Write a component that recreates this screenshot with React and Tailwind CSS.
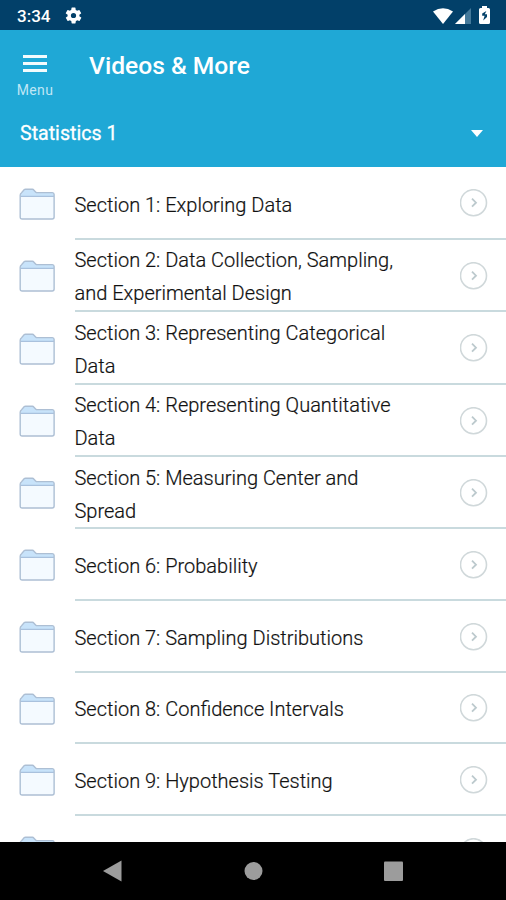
import React from "react";

const sections = [
  { title: "Section 1: Exploring Data", h: "h-[73px]", pad: "pt-[5px]" },
  { title: "Section 2: Data Collection, Sampling, and Experimental Design", h: "h-[72px]", pad: "pt-1" },
  { title: "Section 3: Representing Categorical Data", h: "h-[73px]", pad: "pt-1" },
  { title: "Section 4: Representing Quantitative Data", h: "h-[72px]", pad: "pt-1" },
  { title: "Section 5: Measuring Center and Spread", h: "h-[72px]", pad: "pt-[5px]" },
  { title: "Section 6: Probability", h: "h-[72px]", pad: "pt-1" },
  { title: "Section 7: Sampling Distributions", h: "h-[72px]", pad: "pt-1" },
  { title: "Section 8: Confidence Intervals", h: "h-[71px]", pad: "pt-1" },
  { title: "Section 9: Hypothesis Testing", h: "h-[72px]", pad: "pt-[5px]" },
  { title: "", h: "h-[72px]", pad: "pt-1" },
];

function Folder() {
  return (
    <svg className="ml-[19px] h-8 w-[36.5px] shrink-0" viewBox="0 0 37 32" preserveAspectRatio="none" fill="none">
      <path d="M1.2 29V8.2L2.6 5L5.8 1.2H14.2L17.8 4.6H34.2Q35.6 4.6 35.6 6.2V29Q35.6 31 33.6 31H3.2Q1.2 31 1.2 29Z" fill="#c8e3fa" />
      <path d="M1.4 8.8H35.4V29Q35.4 31 33.6 31H3.2Q1.4 31 1.4 29Z" fill="#f4faff" />
      <path d="M1.4 8.4H35.4" stroke="#a9c1dd" strokeWidth="1.3" />
      <path d="M1.2 29V7.2Q1.2 5.6 2.6 4.8L5.4 1.6Q5.8 1.2 6.6 1.2H13.6Q14.4 1.2 15 2L16.8 3.9Q17.5 4.6 18.3 4.6H33.8Q35.6 4.6 35.6 6.4V29Q35.6 31 33.6 31H3.2Q1.2 31 1.2 29Z" stroke="#adbfd4" strokeWidth="1.4" />
    </svg>
  );
}

function Chevron() {
  return (
    <svg className="mt-px mr-[18px] h-7 w-7 shrink-0" viewBox="0 0 28 28" fill="none">
      <circle cx="13.5" cy="13.7" r="13" stroke="#d0d8da" strokeWidth="1.6" />
      <path d="M12 9.7L16 13.7L12 17.7" stroke="#bcc9cd" strokeWidth="1.8" />
    </svg>
  );
}

function StatusBar() {
  return (
    <div className="flex h-[30px] shrink-0 items-center bg-[#024069] pt-0.5 text-white">
      <span className="ml-[17px] w-[36px] text-[17px] leading-none font-medium">3:34</span>
      <svg className="mb-px ml-[11px] h-[19px] w-[19px]" viewBox="0 0 24 24" fill="currentColor">
        <path d="M19.4 13a7.8 7.8 0 0 0 0-2l2.1-1.6a.5.5 0 0 0 .1-.7l-2-3.4a.5.5 0 0 0-.6-.2l-2.5 1a7.3 7.3 0 0 0-1.7-1L14.5 2.4a.5.5 0 0 0-.5-.4h-4a.5.5 0 0 0-.5.4l-.4 2.7a7.3 7.3 0 0 0-1.7 1l-2.5-1a.5.5 0 0 0-.6.2l-2 3.4a.5.5 0 0 0 .1.7L4.6 11a7.8 7.8 0 0 0 0 2l-2.1 1.6a.5.5 0 0 0-.1.7l2 3.4c.1.2.4.3.6.2l2.5-1c.5.4 1.1.7 1.7 1l.4 2.7c0 .2.2.4.5.4h4c.2 0 .5-.2.5-.4l.4-2.7c.6-.2 1.2-.6 1.7-1l2.5 1c.2.1.5 0 .6-.2l2-3.4a.5.5 0 0 0-.1-.7zM12 15.3a3.3 3.3 0 1 1 0-6.6 3.3 3.3 0 0 1 0 6.6z" />
      </svg>
      <svg className="mb-px ml-auto h-[16px] w-[20px]" viewBox="0 0 20 16" fill="currentColor">
        <path d="M0 3.5Q10-3 20 3.5L10 16Z" />
      </svg>
      <svg className="mb-px ml-[2px] h-[16px] w-[16px]" viewBox="0 0 16 16" fill="currentColor">
        <path d="M0 16L16 0V16Z" fill="#44799a" />
        <path d="M0 16L10 6V16Z" />
      </svg>
      <svg className="mr-[16px] mb-[2px] ml-[8px] h-[18px] w-[11px]" viewBox="0 0 11 18">
        <path d="M3 0H8V2H9.5Q11 2 11 3.5V16.5Q11 18 9.5 18H1.5Q0 18 0 16.5V3.5Q0 2 1.5 2H3Z" fill="#fff" />
        <path d="M7.4 5L3.2 7.5V9.8H5.6L4.2 14.5L8 11V8.3H5.8Z" fill="#024069" />
      </svg>
    </div>
  );
}

export default function App() {
  return (
    <div className="flex h-[900px] w-[506px] flex-col overflow-hidden bg-white font-[Roboto,sans-serif]">
      <StatusBar />
      <header className="h-[137px] shrink-0 bg-[#1fa8d6] text-white">
        <div className="flex h-[76px]">
          <div className="flex w-[70px] flex-col items-center pt-[25px]">
            <div className="flex w-6 flex-col gap-1">
              <div className="h-[3px] bg-white/95" />
              <div className="h-[3px] bg-white/95" />
              <div className="h-[3px] bg-white/95" />
            </div>
            <span className="mt-[9px] text-[14px] leading-[18px] tracking-[0.4px] text-[#bfe6f5]">Menu</span>
          </div>
          <h1 className="ml-[19px] pt-[20px] text-[24.6px] leading-[32px] font-medium whitespace-nowrap">Videos &amp; More</h1>
        </div>
        <div className="flex h-[54px] items-center justify-between pr-[23px] pl-5">
          <span className="pt-[2px] text-[19.6px] leading-none [-webkit-text-stroke:0.3px_white]">Statistics 1</span>
          <svg className="mt-px h-[7px] w-[12px]" viewBox="0 0 12 7" fill="#fff"><path d="M0 0H12L6 7Z" /></svg>
        </div>
      </header>
      <main className="min-h-0 flex-1 overflow-hidden">
        {sections.map((s, i) => (
          <div key={i} className={"flex items-center " + s.h}>
            <Folder />
            <div className="ml-[19px] flex h-full min-w-0 flex-1 items-center border-b-2 border-[#c9dade]">
              <span className={"w-[340px] text-[20px] leading-[33px] font-light text-[#111] [-webkit-text-stroke:0.2px_#111] " + s.pad}>{s.title}</span>
              <div className="ml-auto flex"><Chevron /></div>
            </div>
          </div>
        ))}
      </main>
      <nav className="flex h-[58px] shrink-0 items-center bg-black">
        <svg className="h-[58px] w-full" viewBox="0 0 506 58" fill="#9c9c9c">
          <path d="M103 29L121.5 18.5V39.5Z" />
          <circle cx="253.5" cy="29" r="9" />
          <rect x="384" y="19.5" width="19" height="19.5" rx="1" />
        </svg>
      </nav>
    </div>
  );
}
